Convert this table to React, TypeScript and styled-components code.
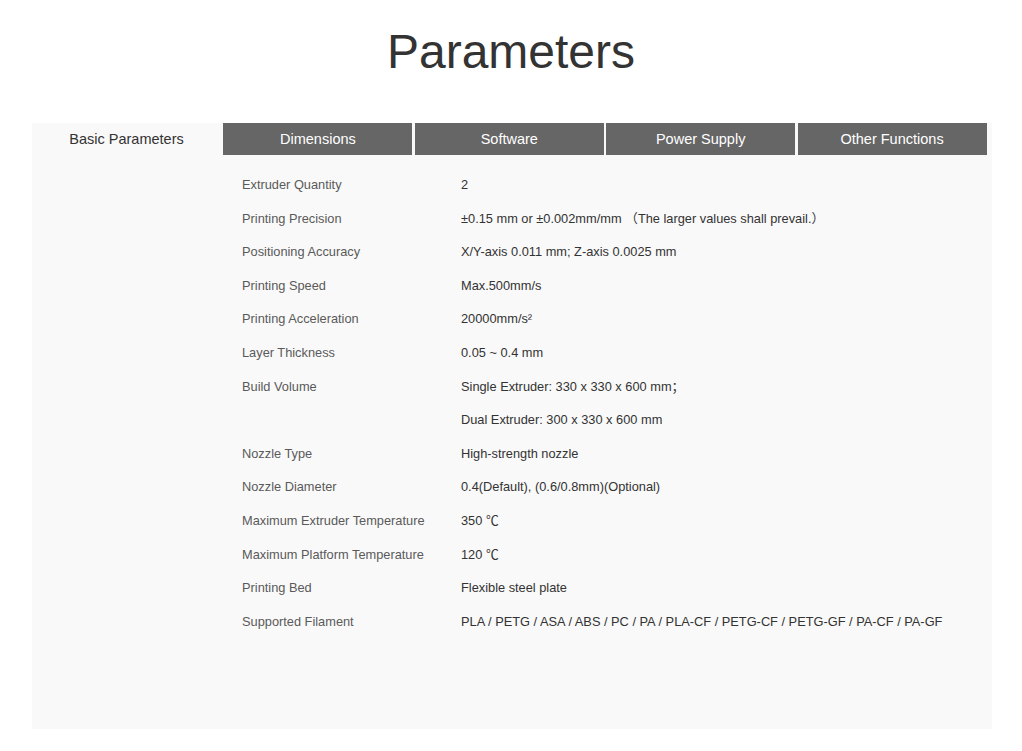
import React, { useState } from "react";
import styled, { createGlobalStyle } from "styled-components";

const GlobalStyle = createGlobalStyle`
  html, body {
    margin: 0;
    padding: 0;
    background: #ffffff;
    font-family: "Liberation Sans", Arial, "Noto Sans CJK SC", sans-serif;
  }
`;

const Page = styled.div`
  width: 1022px;
  padding-top: 20px;
`;

const Title = styled.h1`
  margin: 0;
  height: 64px;
  line-height: 64px;
  text-align: center;
  font-size: 48px;
  font-weight: 400;
  color: #333333;
`;

const Panel = styled.section`
  margin: 39px 0 0 32px;
  width: 960px;
  height: 606px;
  background: #f9f9f9;
  display: flex;
  flex-direction: column;
`;

const TabBar = styled.div`
  display: grid;
  grid-template-columns: repeat(5, 189px);
  column-gap: 2.4px;
`;

const Tab = styled.button<{ $active: boolean }>`
  height: 32px;
  border: none;
  margin: 0;
  padding: 0;
  font-family: inherit;
  font-size: 14.5px;
  cursor: pointer;
  background: ${(p) => (p.$active ? "#f9f9f9" : "#666666")};
  color: ${(p) => (p.$active ? "#333333" : "#ffffff")};
`;

const Table = styled.div`
  margin: 13px 0 0 210px;
  display: grid;
  grid-template-columns: 219px auto;
  font-size: 12.8px;
  line-height: 33.6px;
`;

const Label = styled.div`
  color: #5a5a5a;
`;

const Value = styled.div`
  color: #333333;
`;

const tabs = ["Basic Parameters", "Dimensions", "Software", "Power Supply", "Other Functions"];

const rows: [string, string[]][] = [
  ["Extruder Quantity", ["2"]],
  ["Printing Precision", ["±0.15 mm or ±0.002mm/mm （The larger values shall prevail.）"]],
  ["Positioning Accuracy", ["X/Y-axis 0.011 mm; Z-axis 0.0025 mm"]],
  ["Printing Speed", ["Max.500mm/s"]],
  ["Printing Acceleration", ["20000mm/s²"]],
  ["Layer Thickness", ["0.05 ~ 0.4 mm"]],
  ["Build Volume", ["Single Extruder: 330 x 330 x 600 mm；", "Dual Extruder: 300 x 330 x 600 mm"]],
  ["Nozzle Type", ["High-strength nozzle"]],
  ["Nozzle Diameter", ["0.4(Default), (0.6/0.8mm)(Optional)"]],
  ["Maximum Extruder Temperature", ["350 ℃"]],
  ["Maximum Platform Temperature", ["120 ℃"]],
  ["Printing Bed", ["Flexible steel plate"]],
  ["Supported Filament", ["PLA / PETG / ASA / ABS / PC / PA / PLA-CF / PETG-CF / PETG-GF / PA-CF / PA-GF"]],
];

export default function App() {
  const [active, setActive] = useState(0);
  return (
    <Page>
      <GlobalStyle />
      <Title>Parameters</Title>
      <Panel>
        <TabBar>
          {tabs.map((t, i) => (
            <Tab key={t} $active={i === active} onClick={() => setActive(i)}>
              {t}
            </Tab>
          ))}
        </TabBar>
        <Table>
          {rows.map(([label, values]) => (
            <React.Fragment key={label}>
              <Label>{label}</Label>
              <Value>
                {values.map((v) => (
                  <div key={v}>{v}</div>
                ))}
              </Value>
            </React.Fragment>
          ))}
        </Table>
      </Panel>
    </Page>
  );
}
